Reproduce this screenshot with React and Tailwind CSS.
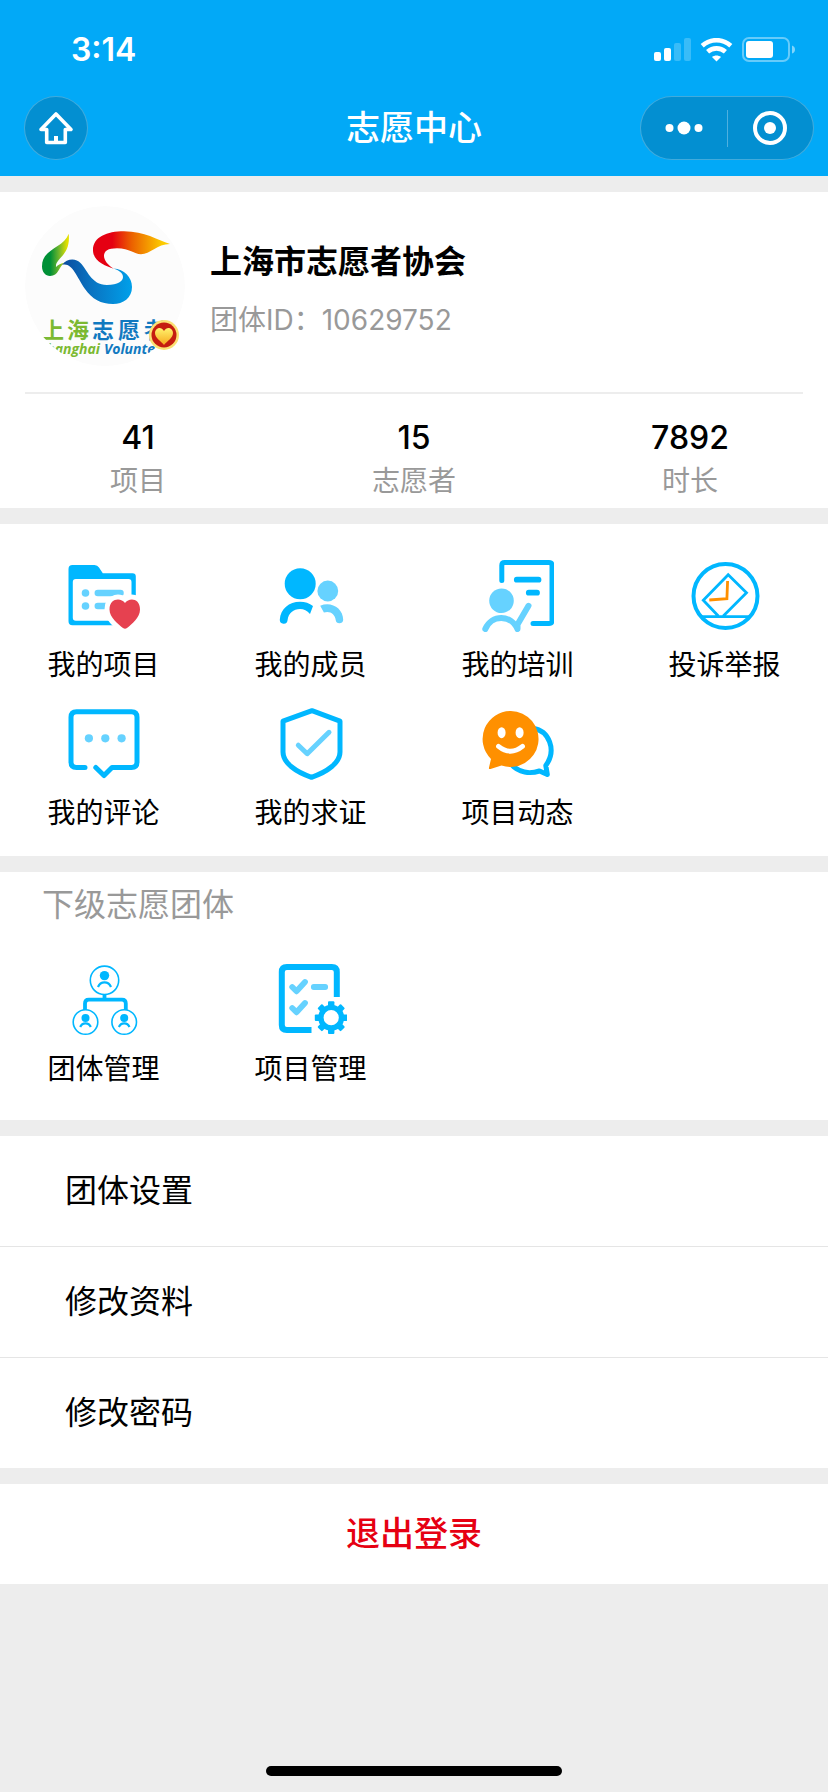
import React from 'react';

const BLUE = '#00b7ff';
const LIGHT = '#66d2ff';
const ORANGE = '#ff9000';

const Icon = ({ children }) => (
    <svg viewBox="0 0 72 72" className="h-18 w-18" fill="none" aria-hidden="true">
        {children}
    </svg>
);

const ProjectIcon = () => (
    <Icon>
        <path fill={BLUE} fillRule="evenodd" d="M4.500 5H26.500Q29.500 5 31 7.500L34.800 13.300H64.500Q67.800 13.300 67.800 16.600V62Q67.800 65.300 64.500 65.300H4.500Q.5 65.300 .5 61.300V9Q.5 5 4.500 5ZM7.800 19Q4.800 19 4.800 22V57.700Q4.800 60.700 7.800 60.700H60.500Q63.500 60.700 63.500 57.700V22Q63.500 19 60.500 19Z" />
        <circle cx="17.500" cy="33" r="3.800" fill={LIGHT} />
        <circle cx="17.500" cy="46" r="3.800" fill={LIGHT} />
        <path stroke={LIGHT} strokeWidth="6.500" strokeLinecap="round" d="M29.800 33H52.500M29.800 46H46" />
        <path fill="#e64150" stroke="#fff" strokeWidth="10" strokeLinejoin="round" paintOrder="stroke" d="M57 43C53 37.500 41.500 38 41.500 49.500C41.500 57.500 50 64 55 68Q57 69.500 59 68C64 64 72 57.500 72 49.500C72 38 61 37.500 57 43Z" />
    </Icon>
);

const MemberIcon = () => (
    <Icon>
        <circle cx="25.200" cy="23.700" r="15.500" fill={BLUE} />
        <circle cx="52.800" cy="31" r="10.400" fill={LIGHT} />
        <path fill={BLUE} d="M4.800 59.500C5.500 49 14 41.700 25 41.700C30 41.700 34.500 43.200 38 46L35 54C32 50.500 29 49 25 49C18.500 49 13.500 53 12.600 60A3.900 3.900 0 0 1 4.800 59.500Z" />
        <path fill={LIGHT} d="M45.200 45.700C56 41 68.200 48 68.200 60A3.800 3.800 0 0 1 60.700 60C60 54 55 50.500 48.900 52.500Z" />
    </Icon>
);

const TrainingIcon = () => (
    <Icon>
        <path stroke={BLUE} strokeWidth="5" strokeLinecap="round" d="M19.800 20.500V5.300Q19.800 2.500 22.800 2.500H67Q70 2.500 70 5.500V60.500Q70 63.500 67 63.500H51" />
        <path stroke={BLUE} strokeWidth="5.800" strokeLinecap="round" d="M34.800 19.700H56.500M46.800 32.700H55" />
        <circle cx="19.500" cy="40.700" r="12.300" fill={LIGHT} />
        <path stroke={LIGHT} strokeWidth="6" strokeLinecap="round" strokeLinejoin="round" d="M3.300 69C9.500 54.300 29 54.300 35.500 69V64.500L46.500 45.800" />
    </Icon>
);

const ReportIcon = () => (
    <Icon>
        <circle cx="36.500" cy="36" r="32" stroke={BLUE} strokeWidth="4" />
        <path stroke={BLUE} strokeWidth="2.800" d="M12 56.700H61M29.300 56L14.300 40.300L39.200 14.700L57.500 32.700L34.300 56" />
        <path stroke={ORANGE} strokeWidth="2.800" d="M38.600 21L37.900 38.700L20.300 40" />
    </Icon>
);

const CommentIcon = () => (
    <Icon>
        <path stroke={BLUE} strokeWidth="5" strokeLinecap="round" strokeLinejoin="round" d="M17 59.500H8.500Q3 59.500 3 54V9.300Q3 3.800 8.500 3.800H63.500Q69 3.800 69 9.300V54Q69 59.500 63.500 59.500H44L36 67.500L27.800 59.500" />
        <circle cx="20.900" cy="30.300" r="4.100" fill={LIGHT} />
        <circle cx="37.300" cy="30.300" r="4.100" fill={LIGHT} />
        <circle cx="53.600" cy="30.300" r="4.100" fill={LIGHT} />
    </Icon>
);

const VerifyIcon = () => (
    <Icon>
        <path stroke={BLUE} strokeWidth="5" strokeLinejoin="round" d="M37 2.700L65 13.200V44C65 55 52 64 36.500 69.300C21 64 8 55 8 44V13.200Z" />
        <path stroke={LIGHT} strokeWidth="5" strokeLinecap="round" strokeLinejoin="round" d="M23.300 37.200L32.200 45.700L54 24.300" />
    </Icon>
);

const MomentsIcon = () => (
    <Icon>
        <path stroke={BLUE} strokeWidth="5" strokeLinejoin="round" d="M51 20.500C67 22.500 75 42 63.800 57.500L65.300 66.500L57.500 63C48 66 37 65 29 56" />
        <path fill={ORANGE} d="M28.800 3A28 28 0 1 1 19.500 57.500L8.500 61Q6.500 61.500 7 59.500L9 51A28 28 0 0 1 28.800 3Z" />
        <ellipse cx="19.600" cy="24.700" rx="4" ry="5.500" fill="#fff" />
        <ellipse cx="37.600" cy="24.700" rx="4" ry="5.500" fill="#fff" />
        <path stroke="#fff" strokeWidth="4.800" strokeLinecap="round" d="M16.500 38.300Q28.500 48 40.500 38.300" />
    </Icon>
);

const GroupIcon = () => (
    <Icon>
        <path stroke={BLUE} strokeWidth="3.800" d="M36.500 30V35.700M17 46V39.500Q17 35.700 20.800 35.700H54Q57.800 35.700 57.800 39.500V46" />
        <g stroke={BLUE} strokeWidth="1.600" fill="#fff">
            <circle cx="36.500" cy="16.300" r="14.200" />
            <circle cx="17.500" cy="58" r="12.300" />
            <circle cx="56.200" cy="58" r="12.300" />
        </g>
        <g fill={BLUE}>
            <circle cx="36.500" cy="11.600" r="4.700" />
            <circle cx="17.500" cy="53.900" r="4" />
            <circle cx="56.200" cy="53.900" r="4" />
        </g>
        <path stroke={BLUE} strokeWidth="2.200" d="M30 23C32.500 16.800 40.500 16.800 43 23M12.200 63C14.200 58.200 20.800 58.200 22.800 63M50.900 63C52.900 58.200 59.500 58.200 61.500 63" />
    </Icon>
);

const GEAR_ANGLES = [0, 45, 90, 135, 180, 225, 270, 315];

const ManageIcon = () => (
    <Icon>
        <path stroke={BLUE} strokeWidth="6" d="M61.800 33V8Q61.800 3 56.800 3H11.800Q6.800 3 6.800 8V61Q6.800 66 11.800 66H36.500" />
        <path stroke={LIGHT} strokeWidth="5.800" strokeLinecap="round" strokeLinejoin="round" d="M17.200 23L21.500 27.300L30 18M17.200 44L21.500 48.300L30 39M38.800 23H50.200" />
        <circle cx="56.200" cy="53.700" r="10.300" stroke={BLUE} strokeWidth="5.400" />
        {GEAR_ANGLES.map((angle) => (
            <rect key={angle} x="53" y="37.300" width="6.400" height="6" rx="1" fill={BLUE} transform={`rotate(${angle} 56.2 53.7)`} />
        ))}
    </Icon>
);

const AvatarLogo = () => (
    <svg viewBox="0 0 160 160" className="h-40 w-40 shrink-0" role="img" aria-label="上海志愿者">
        <defs>
            <clipPath id="avatar-clip"><circle cx="80" cy="80" r="80" /></clipPath>
            <linearGradient id="leaf" gradientUnits="userSpaceOnUse" x1="17" y1="0" x2="45" y2="0">
                <stop offset="0.3" stopColor="#009036" />
                <stop offset="0.6" stopColor="#6cb52d" />
                <stop offset="0.9" stopColor="#e4e000" />
            </linearGradient>
            <linearGradient id="wave" gradientUnits="userSpaceOnUse" x1="37" y1="0" x2="107" y2="0">
                <stop offset="0" stopColor="#0b4a9c" />
                <stop offset="0.4" stopColor="#0a72c0" />
                <stop offset="1" stopColor="#00a0ea" />
            </linearGradient>
            <linearGradient id="flame" gradientUnits="userSpaceOnUse" x1="68" y1="0" x2="145" y2="0">
                <stop offset="0.25" stopColor="#e50012" />
                <stop offset="0.5" stopColor="#eb6000" />
                <stop offset="0.9" stopColor="#fccb00" />
            </linearGradient>
            <linearGradient id="gold" x1="0" y1="0" x2="0" y2="1">
                <stop offset="0" stopColor="#fff36e" />
                <stop offset="1" stopColor="#f6a81c" />
            </linearGradient>
        </defs>
        <g clipPath="url(#avatar-clip)">
            <circle cx="80" cy="80" r="80" fill="#fcfcfc" />
            <path fill="url(#leaf)" d="M43.700 27.700C38 43 17 42 17 60.500C17 66 20.500 70 25 70C34 70 33 61 40 56.500C36 57 33 59 31 61C30 52 46 50 43.700 27.700Z" />
            <path fill="url(#wave)" d="M37 59C42 52 51 52 55.500 57C62 63 66 79 82 79C93 79 98 75 98 71C98 67 94 64.500 88.500 62.500C99 63 107 71 107 81C107 92 98 98 88 98C76 98 67 93 60 83C51 70 47 56 37 59Z" />
            <path fill="url(#flame)" d="M89 62.700C80 60 68 55 68 44C68 31 82 25.300 99 25.300C120 25.300 132 34 145 38C132 38 125 48.300 116 48.300C109 48.300 105 42.300 92 42.300C83 42.300 79 45 79 50C79 54 83 59.500 89 62.700Z" />
            <g fontSize="22" fontWeight="700" fontFamily='"Noto Sans CJK SC", sans-serif'>
                <text x="17 42" y="132" fill="#7bb931">上海</text>
                <text x="67 93 119" y="132" fill="#1179c0">志愿者</text>
            </g>
            <g fontSize="14" fontWeight="700" fontStyle="italic" fontFamily='"Open Sans", sans-serif'>
                <text x="75" y="148" fill="#7bb931" textAnchor="end">Shanghai</text>
                <text x="79" y="148" fill="#1179c0">Volunteer</text>
            </g>
        </g>
        <circle cx="139" cy="129" r="15" fill="#fbe174" />
        <circle cx="139" cy="129" r="12.500" fill="#c51d10" />
        <path fill="url(#gold)" d="M139 125C136 119.500 130 122 130 127C130 132 136 135 139 139C142 135 148 132 148 127C148 122 142 119.500 139 125Z" />
    </svg>
);

const StatusIcons = () => (
    <div className="flex items-center gap-[9px]" aria-hidden="true">
        <svg viewBox="0 0 37 24" className="h-6 w-[37px]" fill="#fff">
            <rect x="0" y="14" width="7" height="9" rx="2" />
            <rect x="10" y="10" width="7" height="13" rx="2" />
            <rect x="20" y="5" width="7" height="18" rx="2" opacity="0.22" />
            <rect x="30" y="0" width="7" height="23" rx="2" opacity="0.22" />
        </svg>
        <svg viewBox="0 0 33 24" className="h-6 w-[33px]" fill="none">
            <path stroke="#fff" strokeWidth="4.600" d="M2.200 7.800C10.500 .3 22.500 .3 30.800 7.800M7.600 13.800C12.800 9.200 20.200 9.200 25.400 13.800" />
            <path fill="#fff" d="M12 19C14.500 17 18.500 17 21 19L16.500 23.500Z" />
        </svg>
        <svg viewBox="0 0 54 26" className="h-[26px] w-[54px]" fill="none">
            <rect x="1" y="1" width="46" height="23" rx="6" stroke="#fff" strokeWidth="2" opacity="0.4" />
            <rect x="4" y="4" width="27" height="17" rx="3" fill="#fff" />
            <path d="M50 8.500Q53 9.500 53 12.500Q53 15.500 50 16.500Z" fill="#fff" opacity="0.5" />
        </svg>
    </div>
);

const stats = [
    { label: '项目', value: 41 },
    { label: '志愿者', value: 15 },
    { label: '时长', value: 7892 },
];

const mainMenu = [
    { label: '我的项目', icon: ProjectIcon },
    { label: '我的成员', icon: MemberIcon },
    { label: '我的培训', icon: TrainingIcon },
    { label: '投诉举报', icon: ReportIcon },
    { label: '我的评论', icon: CommentIcon },
    { label: '我的求证', icon: VerifyIcon },
    { label: '项目动态', icon: MomentsIcon },
];

const groupMenu = [
    { label: '团体管理', icon: GroupIcon },
    { label: '项目管理', icon: ManageIcon },
];

const settings = ['团体设置', '修改资料', '修改密码'];

const MenuGrid = ({ items }) => (
    <div className="grid grid-cols-4">
        {items.map(({ label, icon: ItemIcon }) => (
            <button key={label} type="button" className="flex flex-col items-center gap-[13px] pt-[18px] pb-[5px]">
                <ItemIcon />
                <span className="text-[28px] leading-10">{label}</span>
            </button>
        ))}
    </div>
);

const App = () => {
    return (
        <div className="flex min-h-screen flex-col bg-[#ededed] font-['Inter','Noto_Sans_CJK_SC',sans-serif] text-black">
            {/* Header */}
            <header className="bg-[#02a9f7] pb-4 text-white">
                <div className="flex h-24 items-center justify-between pt-1 pr-8 pl-[71px]">
                    <span className="text-[32px] leading-10 font-semibold">3:14</span>
                    <StatusIcons />
                </div>
                <div className="grid grid-cols-[1fr_auto_1fr] items-center px-[14px]">
                    <button type="button" aria-label="首页" className="ml-[10px] flex h-16 w-16 items-center justify-center rounded-full border border-white/25 bg-[#038fd1]">
                        <svg viewBox="0 0 36 36" className="h-9 w-9" fill="none">
                            <path stroke="#fff" strokeWidth="3.600" strokeLinejoin="round" strokeLinecap="round" d="M8.700 19.500H3L18 4L33 19.500H27.300V32.500H8.700Z" />
                            <rect x="16" y="26" width="4" height="6" fill="#fff" />
                        </svg>
                    </button>
                    <h1 className="text-[34px] leading-12 font-medium">志愿中心</h1>
                    <div className="flex h-16 w-[174px] items-center justify-self-end rounded-full border border-white/25 bg-[#038fd1]">
                        <button type="button" aria-label="更多" className="flex flex-1 justify-center">
                            <svg viewBox="0 0 38 14" className="h-[14px] w-[38px]" fill="#fff">
                                <circle cx="4.500" cy="7" r="4" />
                                <circle cx="19" cy="7" r="6.500" />
                                <circle cx="33.500" cy="7" r="4" />
                            </svg>
                        </button>
                        <span className="h-[37px] w-px bg-white/30"></span>
                        <button type="button" aria-label="关闭" className="flex flex-1 justify-center">
                            <svg viewBox="0 0 34 34" className="h-[34px] w-[34px]" fill="none">
                                <circle cx="17" cy="17" r="15" stroke="#fff" strokeWidth="4" />
                                <circle cx="17" cy="17" r="6" fill="#fff" />
                            </svg>
                        </button>
                    </div>
                </div>
            </header>

            <main className="flex flex-col gap-4 pt-4">
                {/* Profile */}
                <section className="bg-white px-[25px]">
                    <div className="flex gap-[25px] border-b-2 border-[#ededed] pt-[14px] pb-[26px]">
                        <AvatarLogo />
                        <div className="flex flex-col gap-[14px] pt-8">
                            <h2 className="text-[32px] leading-12 font-bold">上海市志愿者协会</h2>
                            <p className="text-[28px] leading-10 text-[#999]">团体ID：10629752</p>
                        </div>
                    </div>
                    <dl className="-mx-[25px] grid grid-cols-3 pt-6 pb-[7px] text-center">
                        {stats.map((item) => (
                            <div key={item.label} className="flex flex-col-reverse gap-[3px]">
                                <dt className="text-[28px] leading-10 text-[#999]">{item.label}</dt>
                                <dd className="text-[32px] leading-10 font-medium">{item.value}</dd>
                            </div>
                        ))}
                    </dl>
                </section>

                <section className="bg-white py-[18px]">
                    <MenuGrid items={mainMenu} />
                </section>

                {/* Sub groups */}
                <section className="bg-white pt-2 pb-[26px]">
                    <h2 className="mb-4 pl-[42px] text-[32px] leading-[50px] text-[#999]">下级志愿团体</h2>
                    <MenuGrid items={groupMenu} />
                </section>

                {/* Settings */}
                <ul className="divide-y divide-[#e5e5e5] bg-white">
                    {settings.map((label) => (
                        <li key={label}>
                            <button type="button" className="block w-full px-[65px] py-[31px] text-left text-[32px] leading-12">
                                {label}
                            </button>
                        </li>
                    ))}
                </ul>

                <button type="button" className="bg-white py-[26px] text-center text-[34px] leading-12 font-medium text-[#e60012]">
                    退出登录
                </button>
            </main>

            <footer className="mt-auto flex justify-center pt-8 pb-4">
                <span className="h-[10px] w-[296px] rounded-full bg-black"></span>
            </footer>
        </div>
    );
};

export default App;
